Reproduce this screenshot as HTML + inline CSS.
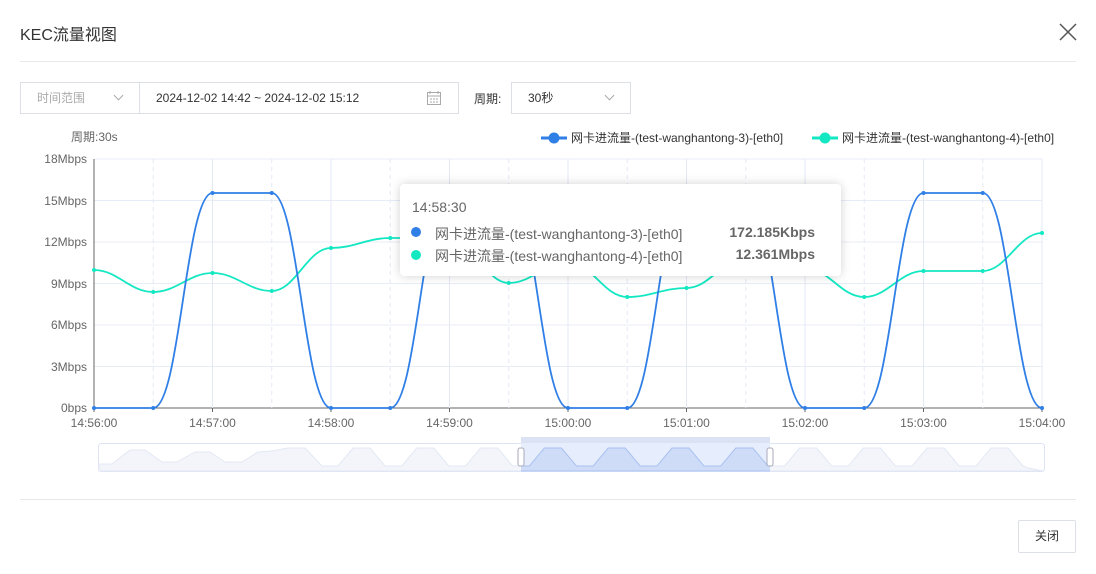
<!DOCTYPE html>
<html><head><meta charset="utf-8"><style>
*{margin:0;padding:0;box-sizing:border-box}
body{width:1096px;height:574px;background:#fff;font-family:"Liberation Sans","Noto Sans CJK SC",sans-serif;position:relative;overflow:hidden;color:#333}
.a{position:absolute}
.box{position:absolute;border:1px solid #dcdfe6;height:32px;top:82px;font-size:12px;line-height:30px}
.chev{position:absolute;width:7px;height:7px;border-right:1px solid #aaa;border-bottom:1px solid #aaa;transform:rotate(45deg);top:9px}
.t{font-size:12px;fill:#666}
</style></head><body>
<div class="a" style="left:20px;top:21px;font-size:16px;color:#333">KEC流量视图</div>
<svg class="a" style="left:1058px;top:22px" width="20" height="20"><path d="M2 2L18 18M18 2L2 18" stroke="#555" stroke-width="1.5"/></svg>
<div class="a" style="left:20px;top:61px;width:1056px;height:1px;background:#e8e8e8"></div>
<div class="box" style="left:20px;width:120px;color:#aaa;padding-left:16px">时间范围<span class="chev" style="left:94px"></span></div>
<div class="box" style="left:139px;width:320px;padding-left:16px;color:#333">2024-12-02 14:42 ~ 2024-12-02 15:12
<svg class="a" style="left:286px;top:7px" width="16" height="16"><rect x="1.5" y="2.5" width="13" height="12" fill="none" stroke="#aaa"/><path d="M1.5 6h13M4 1v3M12 1v3M4 9h2M7 9h2M10 9h2M4 12h2M7 12h2M10 12h2" stroke="#aaa"/></svg></div>
<div class="a" style="left:474px;top:90px;font-size:12px;color:#333">周期:</div>
<div class="box" style="left:511px;width:120px;padding-left:16px">30秒<span class="chev" style="left:94px"></span></div>
<svg class="a" style="left:0;top:0" width="1096" height="574" id="s">
<defs><clipPath id="cp"><rect x="521" y="443" width="249" height="29"/></clipPath></defs>
<text x="71" y="141" class="t">周期:30s</text>
<path d="M541 138h26" stroke="#2f7fe6" stroke-width="3"/><circle cx="554" cy="138" r="5.5" fill="#2f7fe6"/>
<text x="571" y="142" style="font-size:12px;fill:#333">网卡进流量-(test-wanghantong-3)-[eth0]</text>
<path d="M812 138h26" stroke="#13e8c3" stroke-width="3"/><circle cx="825" cy="138" r="5.5" fill="#13e8c3"/>
<text x="842" y="142" style="font-size:12px;fill:#333">网卡进流量-(test-wanghantong-4)-[eth0]</text>
<g id="grid"></g>
<g class="t" text-anchor="end">
<text x="87" y="163">18Mbps</text><text x="87" y="205">15Mbps</text><text x="87" y="246">12Mbps</text><text x="87" y="288">9Mbps</text><text x="87" y="329">6Mbps</text><text x="87" y="371">3Mbps</text><text x="87" y="412">0bps</text></g>
<g class="t" text-anchor="middle" id="xl"></g>
<path id="g" fill="none" stroke="#13e8c3" stroke-width="1.8"/>
<path id="b" fill="none" stroke="#2f7fe6" stroke-width="1.8"/>
<g id="dots"></g>
<rect x="98.5" y="443.5" width="946" height="28" rx="3" fill="#fff" stroke="#dde3f3"/>
<path id="mini" fill="#f3f5fb" stroke="#e3e8f3"/>
<rect x="521" y="437" width="249" height="6" fill="#dbe2f4"/>
<rect x="521" y="443" width="249" height="29" fill="#e6edfc"/>
<path id="mini2" clip-path="url(#cp)" fill="#cfdcf8" stroke="#a9c1f0"/>
<rect x="518" y="448" width="6" height="18" rx="2" fill="#fff" stroke="#aab"/>
<rect x="767" y="448" width="6" height="18" rx="2" fill="#fff" stroke="#aab"/>
</svg>
<div class="a" style="left:400px;top:184px;width:441px;height:92px;background:#fff;border-radius:4px;box-shadow:0 0 10px rgba(0,0,0,.18);font-size:14px;color:#666">
<div class="a" style="left:12px;top:15px">14:58:30</div>
<div class="a" style="left:11px;top:43px;width:10px;height:10px;border-radius:50%;background:#2f7fe6"></div>
<div class="a" style="left:35px;top:40px">网卡进流量-(test-wanghantong-3)-[eth0]</div>
<div class="a" style="right:26px;top:40px;font-weight:bold">172.185Kbps</div>
<div class="a" style="left:11px;top:66px;width:10px;height:10px;border-radius:50%;background:#13e8c3"></div>
<div class="a" style="left:35px;top:62px">网卡进流量-(test-wanghantong-4)-[eth0]</div>
<div class="a" style="right:26px;top:62px;font-weight:bold">12.361Mbps</div>
</div>
<div class="a" style="left:20px;top:499px;width:1056px;height:1px;background:#e8e8e8"></div>
<div class="a" style="left:1018px;top:520px;width:58px;height:33px;border:1px solid #dcdfe6;border-radius:2px;font-size:12px;line-height:31px;text-align:center">关闭</div>
<script>
var ns="http://www.w3.org/2000/svg",x0=94,dx=59.25;
function el(p,t,a){var e=document.createElementNS(ns,t);for(var k in a)e.setAttribute(k,a[k]);p.appendChild(e);return e}
var gr=document.getElementById('grid');
for(var i=0;i<7;i++){var y=159+i*41.5;el(gr,'path',{d:'M94 '+y+'H1042',stroke:i==6?'#666':'#e8ecf7','stroke-width':1})}
for(var i=1;i<=16;i++){var x=x0+i*dx;el(gr,'path',{d:'M'+x+' 159V408',stroke:'#e3e8f5','stroke-dasharray':i%2?'4 4':'','stroke-width':1})}
el(gr,'path',{d:'M94 159V408',stroke:'#666'});
var lb=['14:56:00','14:57:00','14:58:00','14:59:00','15:00:00','15:01:00','15:02:00','15:03:00','15:04:00'],xl=document.getElementById('xl');
lb.forEach(function(s,i){var t=el(xl,'text',{x:x0+i*118.5,y:427});t.textContent=s;el(gr,'path',{d:'M'+(x0+i*118.5)+' 408v4',stroke:'#666'})});
var H=193,L=408;
var B=[L,L,H,H,L,L,H,H,L,L,H,H,L,L,H,H,L];
var G=[270,292,273,291,248,238,238,283,262,297,288,258,268,297,271,271,233];
function path(Y,k){var d='M'+x0+' '+Y[0];for(var i=1;i<Y.length;i++){var a=x0+(i-1)*dx,b=x0+i*dx;d+='C'+(a+dx*k)+' '+Y[i-1]+' '+(b-dx*k)+' '+Y[i]+' '+b+' '+Y[i]}return d}
document.getElementById('b').setAttribute('d',path(B,0.45));
document.getElementById('g').setAttribute('d',path(G,0.4));
var dt=document.getElementById('dots');
for(var i=0;i<17;i++){el(dt,'circle',{cx:x0+i*dx,cy:B[i],r:2,fill:'#2f7fe6'});el(dt,'circle',{cx:x0+i*dx,cy:G[i],r:2,fill:'#13e8c3'})}
var P=[[99,471],[99,464],[112,464],[130,450],[145,450],[162,462],[177,462],[195,452],[210,452],[225,462],[242,462],[258,452],[272,451],[288,448],[305,448],[322,466]];
for(var k=0;k<11;k++){var s=353+63.8*k;P.push([s-15,466],[s,448],[s+17,448],[s+32,466]);}
P.push([1028,468],[1043,471]);
var md='M'+P.map(function(p){return p[0]+' '+p[1]}).join('L')+'Z';
document.getElementById('mini').setAttribute('d',md);
document.getElementById('mini2').setAttribute('d',md);
</script>
</body></html>
